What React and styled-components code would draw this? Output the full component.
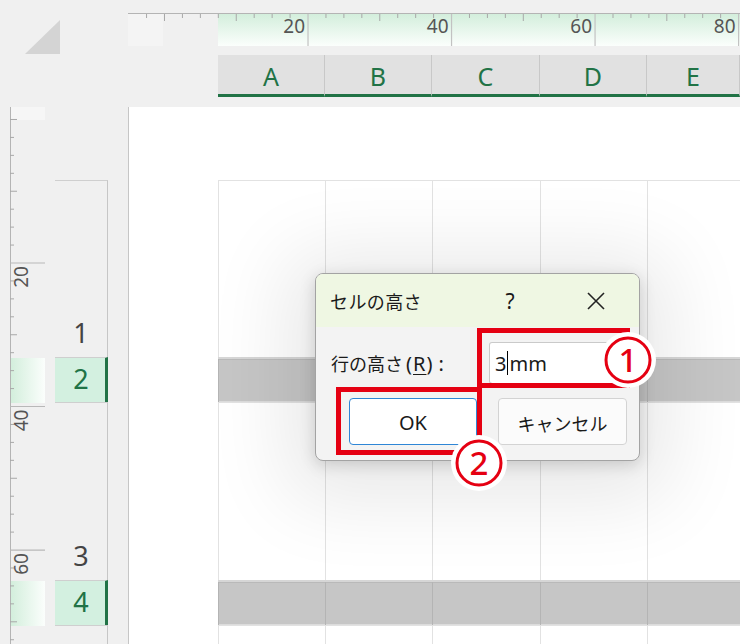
import React from 'react'
import styled, { createGlobalStyle } from 'styled-components'

const GlobalStyle = createGlobalStyle`
  html, body { margin: 0; padding: 0; background: #f0f0f0; }
  body { font-family: "Noto Sans", "Noto Sans CJK JP", sans-serif; }
`

const GREEN = '#217346'
const COLS = ['A', 'B', 'C', 'D', 'E']
const COL_TEMPLATE = '107px 107px 108px 107px 1fr'

const ROWS = [
  { n: 1, h: 177 },
  { n: 2, h: 45, sel: true },
  { n: 3, h: 178 },
  { n: 4, h: 45, sel: true },
  { n: 5, h: 200 },
]

const Screen = styled.div`
  position: relative;
  width: 740px;
  height: 644px;
  overflow: hidden;
  background: #f0f0f0;
`

const Top = styled.div`
  display: grid;
  grid-template-columns: 128px 90px 1fr;
  grid-template-rows: 13px 33px 9px 42px 10px;
`

const Corner = styled.div`
  grid-column: 1;
  grid-row: 1 / 6;
  padding: 20px 0 0 25px;
`

const Triangle = styled.div`
  width: 35px;
  height: 34px;
  background: #d4d4d4;
  clip-path: polygon(100% 0, 100% 100%, 0 100%);
`

const HRuler = styled.div`
  grid-column: 2 / 4;
  grid-row: 2;
  line-height: 0;
`

const ColHeads = styled.div`
  grid-column: 3;
  grid-row: 4;
  display: grid;
  grid-template-columns: ${COL_TEMPLATE};
`

const ColHead = styled.div`
  background: #e1e1e1;
  border-right: 1px solid #c8c8c8;
  border-bottom: 3px solid ${GREEN};
  color: ${GREEN};
  font-size: 25px;
  display: flex;
  align-items: center;
  justify-content: center;
  padding-top: 2px;
`

const Body = styled.div`
  display: flex;
  height: 537px;
`

const VRuler = styled.div`
  width: 55px;
  flex: none;
  line-height: 0;
`

const RowHeads = styled.div`
  width: 53px;
  flex: none;
  padding-top: 73px;
  display: flex;
  flex-direction: column;
`

const RowHead = styled.div`
  box-sizing: border-box;
  height: ${p => p.h}px;
  flex: none;
  border-top: 1px solid #cfcfcf;
  border-right: ${p => (p.sel ? `3px solid ${GREEN}` : '1px solid #c6c6c6')};
  background: ${p => (p.sel ? '#d3f0e0' : '#f0f0f0')};
  color: ${p => (p.sel ? GREEN : '#444')};
  font-size: 27px;
  display: flex;
  align-items: flex-end;
  justify-content: center;
  padding-bottom: ${p => (p.sel ? 5 : 6)}px;
  padding-left: ${p => (p.sel ? 2 : 0)}px;
`

const Page = styled.div`
  flex: 1;
  margin-left: 20px;
  background: #fff;
  border-left: 1px solid #c6c6c6;
  padding: 73px 0 0 89px;
`

const SheetRow = styled.div`
  box-sizing: border-box;
  height: ${p => p.h}px;
  display: grid;
  grid-template-columns: ${COL_TEMPLATE};
  background: ${p => (p.sel ? '#c6c6c6' : '#fff')};
  border-top: ${p => (p.sel ? '2px solid #d6d6d6' : '1px solid #e2e2e2')};
  ${p => p.sel && 'box-shadow: inset 0 1px 0 #b9b9b9, inset 0 -1px 0 #dcdcdc;'}
`

const Cell = styled.div`
  border-left: 1px solid ${p => (p.sel ? '#b4b4b4' : '#e2e2e2')};
`

/* dialog */

const Dialog = styled.div`
  position: absolute;
  left: 315px;
  top: 273px;
  width: 325px;
  height: 188px;
  box-sizing: border-box;
  border: 1px solid #a3a3a3;
  border-radius: 8px;
  overflow: hidden;
  background: #f3f3f3;
  box-shadow: 0 10px 80px 30px rgba(0, 0, 0, 0.09), 0 4px 16px rgba(0, 0, 0, 0.16);
  display: flex;
  flex-direction: column;
  color: #1a1a1a;
  font-family: "Noto Sans CJK JP", "Noto Sans", sans-serif;
`

const TitleBar = styled.div`
  height: 53px;
  flex: none;
  background: #eff7e3;
  display: flex;
  align-items: center;
  padding: 0 21px 0 14px;
  font-size: 18px;
`

const Title = styled.div`
  flex: 1;
  letter-spacing: 0.4px;
`

const Help = styled.div`
  width: 46px;
  margin-right: 41px;
  text-align: center;
  font-size: 21px;
  font-family: "Noto Sans", sans-serif;
`

const Close = styled.div`
  width: 44px;
  display: flex;
  justify-content: center;
  line-height: 0;
`

const Content = styled.div`
  padding: 15px 0 0 15px;
`

const InputRow = styled.div`
  display: flex;
  align-items: center;
  height: 42px;
`

const Label = styled.div`
  width: 158px;
  font-size: 18px;
  u { text-decoration-thickness: 1px; text-underline-offset: 3px; }
`

const Key = styled.span`
  margin-left: 3px;
  font-size: 20px;
  letter-spacing: 1px;
  font-family: "Noto Sans", sans-serif;
`

const Colon = styled.span`
  margin-left: 5px;
  font-size: 20px;
  font-family: "Noto Sans", sans-serif;
`

const Field = styled.div`
  box-sizing: border-box;
  width: 126px;
  height: 42px;
  background: #fff;
  border: 1px solid #cacaca;
  border-bottom-color: #8a8a8a;
  border-radius: 3px;
  display: flex;
  align-items: center;
  padding-left: 5px;
  font-size: 20px;
  font-family: "Noto Sans", sans-serif;
`

const Caret = styled.span`
  display: inline-block;
  width: 0;
  height: 24px;
  border-left: 1.5px solid #000;
  margin: 0 1px;
`

const ButtonRow = styled.div`
  display: flex;
  gap: 21px;
  margin-top: 14px;
  padding-left: 18px;
`

const Button = styled.div`
  box-sizing: border-box;
  width: ${p => p.w}px;
  height: 47px;
  border-radius: 4px;
  border: 1px solid ${p => (p.primary ? '#2f86d6' : '#d3d3d3')};
  background: ${p => (p.primary ? '#fff' : '#fbfbfb')};
  display: flex;
  align-items: center;
  justify-content: center;
  font-size: ${p => (p.primary ? 20 : 18)}px;
  font-family: ${p => (p.primary ? '"Noto Sans", sans-serif' : '"Noto Sans CJK JP", sans-serif')};
  padding-top: 2px;
`

/* annotations */

const RedBox = styled.div`
  position: absolute;
  left: ${p => p.x}px;
  top: ${p => p.y}px;
  width: ${p => p.w}px;
  height: ${p => p.h}px;
  box-sizing: border-box;
  border: 5px solid #e50012;
`

const Badge = styled.div`
  position: absolute;
  left: ${p => p.cx - 29}px;
  top: ${p => p.cy - 29}px;
  width: 58px;
  height: 58px;
  line-height: 0;
`

function HRulerSvg() {
  const ticks = []
  const labels = []
  for (let k = -2; k <= 32; k++) {
    const x = 36.5 + k * 17.94
    if (x < 2 || x > 611) continue
    if (k > 0 && k % 8 === 0) {
      ticks.push(<line key={k} x1={x} y1={1} x2={x} y2={33} stroke="#c2c2c2" strokeWidth="1.2" />)
      labels.push(
        <text key={'l' + k} x={x - 3} y={20} textAnchor="end" fontSize="19" fill="#555" fontFamily="Noto Sans, sans-serif">
          {(k / 8) * 20}
        </text>
      )
    } else {
      const len = k % 4 === 0 ? 7 : 4
      ticks.push(<line key={k} x1={x} y1={1} x2={x} y2={1 + len} stroke="#a8a8a8" strokeWidth="1" />)
    }
  }
  return (
    <svg width="612" height="33" viewBox="0 0 612 33">
      <defs>
        <linearGradient id="hg" x1="0" y1="0" x2="0" y2="1">
          <stop offset="0" stopColor="#d2eedb" />
          <stop offset="1" stopColor="#fbfefc" />
        </linearGradient>
      </defs>
      <rect x="0" y="0" width="35" height="33" fill="#f4f4f4" />
      <rect x="90" y="0" width="522" height="33" fill="url(#hg)" />
      <line x1="0" y1="0.5" x2="612" y2="0.5" stroke="#b4b4b4" />
      {ticks}
      {labels}
    </svg>
  )
}

function VRulerSvg() {
  const ticks = []
  const labels = []
  for (let k = -8; k <= 22; k++) {
    const y = 156 + k * 17.94
    if (y < 12 || y > 536) continue
    if (k >= 0 && k % 8 === 0) {
      ticks.push(<line key={k} x1={10} y1={y} x2={45} y2={y} stroke="#b8b8b8" strokeWidth="1.2" />)
      labels.push(
        <text key={'l' + k} transform={`translate(28 ${y + 3}) rotate(-90)`} textAnchor="end" fontSize="19" fill="#555" fontFamily="Noto Sans, sans-serif">
          {(k / 8 + 1) * 20}
        </text>
      )
    } else {
      const len = k % 4 === 0 ? 7 : 4
      ticks.push(<line key={k} x1={10} y1={y} x2={10 + len} y2={y} stroke="#a8a8a8" strokeWidth="1" />)
    }
  }
  return (
    <svg width="45" height="537" viewBox="0 0 45 537">
      <defs>
        <linearGradient id="vg" x1="0" y1="0" x2="1" y2="0">
          <stop offset="0" stopColor="#d2eedb" />
          <stop offset="1" stopColor="#fbfefc" />
        </linearGradient>
      </defs>
      <rect x="10" y="0" width="35" height="13" fill="#f6f6f6" />
      <rect x="10" y="251" width="35" height="45" fill="url(#vg)" />
      <rect x="10" y="474" width="35" height="45" fill="url(#vg)" />
      <line x1="10.5" y1="0" x2="10.5" y2="537" stroke="#b4b4b4" />
      {ticks}
      {labels}
    </svg>
  )
}

function CloseIcon() {
  return (
    <svg width="20" height="20" viewBox="0 0 20 20">
      <path d="M2 2 L18 18 M18 2 L2 18" stroke="#222" strokeWidth="1.6" fill="none" />
    </svg>
  )
}

function NumberBadge({ cx, cy, n }) {
  return (
    <Badge cx={cx} cy={cy}>
      <svg width="58" height="58" viewBox="0 0 58 58">
        <circle cx="29" cy="29" r="28" fill="#fff" />
        <circle cx="29" cy="29" r="22" fill="#fff" stroke="#e50012" strokeWidth="3" />
        <text x="29" y="40.5" textAnchor="middle" fontSize="33" fontWeight="500" fill="#e50012" fontFamily="Noto Sans, sans-serif">
          {n}
        </text>
      </svg>
    </Badge>
  )
}

export default function App() {
  return (
    <Screen>
      <GlobalStyle />
      <Top>
        <Corner>
          <Triangle />
        </Corner>
        <HRuler>
          <HRulerSvg />
        </HRuler>
        <ColHeads>
          {COLS.map(c => (
            <ColHead key={c}>{c}</ColHead>
          ))}
        </ColHeads>
      </Top>
      <Body>
        <VRuler>
          <VRulerSvg />
        </VRuler>
        <RowHeads>
          {ROWS.map(r => (
            <RowHead key={r.n} h={r.h} sel={r.sel}>
              {r.n < 5 ? r.n : ''}
            </RowHead>
          ))}
        </RowHeads>
        <Page>
          {ROWS.map(r => (
            <SheetRow key={r.n} h={r.h} sel={r.sel}>
              {COLS.map(c => (
                <Cell key={c} sel={r.sel} />
              ))}
            </SheetRow>
          ))}
        </Page>
      </Body>

      <Dialog>
        <TitleBar>
          <Title>セルの高さ</Title>
          <Help>?</Help>
          <Close>
            <CloseIcon />
          </Close>
        </TitleBar>
        <Content>
          <InputRow>
            <Label>
              行の高さ<Key>(<u>R</u>)</Key><Colon>:</Colon>
            </Label>
            <Field>
              3<Caret />mm
            </Field>
          </InputRow>
          <ButtonRow>
            <Button primary w={128}>OK</Button>
            <Button w={129}>キャンセル</Button>
          </ButtonRow>
        </Content>
      </Dialog>

      <RedBox x={477} y={328} w={153} h={60} />
      <RedBox x={336} y={387} w={146} h={68} />
      <NumberBadge cx={628} cy={360} n="1" />
      <NumberBadge cx={479} cy={463} n="2" />
    </Screen>
  )
}
